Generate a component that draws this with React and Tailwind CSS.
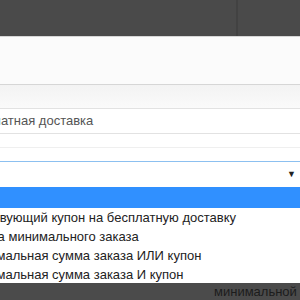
const OPTIONS = [
  'Действующий купон на бесплатную доставку',
  'Сумма минимального заказа',
  'Минимальная сумма заказа ИЛИ купон',
  'Минимальная сумма заказа И купон',
];

export default function App() {
  return (
    <div className="relative h-[300px] w-[300px] overflow-hidden bg-white font-['Liberation_Sans',sans-serif] text-[13px]">
      {/* top toolbar */}
      <div className="flex h-[36px] bg-[#4a4a4a]">
        <div className="w-[236px]" />
        <div className="w-[2px] bg-[#424242]" />
        <div className="flex-1" />
      </div>

      {/* header panel */}
      <div className="h-[49px] border-y border-[#d6d6d6] bg-[#fbfbfb]" />
      <div className="h-[23px] bg-gradient-to-b from-[#f3f3f3] to-[#fafafa]" />

      {/* text input */}
      <div className="flex h-[26px] items-center border-y border-[#e2e2e2] bg-white">
        <span className="-ml-[36px] text-[13px] text-[#555]">Бесплатная доставка</span>
      </div>
      <div className="h-[13px] bg-white" />
      <div className="h-[14px] border-t border-[#efefef] bg-white" />

      {/* select with focus */}
      <div className="flex h-[25px] items-center justify-end border-t border-[#8cc0f0] bg-white pr-[4px]">
        <span className="text-[9px] leading-none text-[#222]">▼</span>
      </div>

      {/* open dropdown list */}
      <div className="absolute left-0 top-[187px] w-[300px] border-b border-[#7c8796] bg-white">
        <div className="h-[21px] bg-[#3090ff]" />
        {OPTIONS.map((o) => (
          <div key={o} className="flex h-[19px] items-center whitespace-nowrap">
            <span className="-ml-[36px] text-[#222]">{o}</span>
          </div>
        ))}
      </div>

      {/* bottom dark bar */}
      <div className="absolute left-0 top-[283px] flex h-[17px] w-[300px] items-center bg-[#4b4b4b] whitespace-nowrap">
        <span className="ml-[214px] text-[13px] text-[#1c1c1c]">минимальной суммы</span>
      </div>
    </div>
  );
}
